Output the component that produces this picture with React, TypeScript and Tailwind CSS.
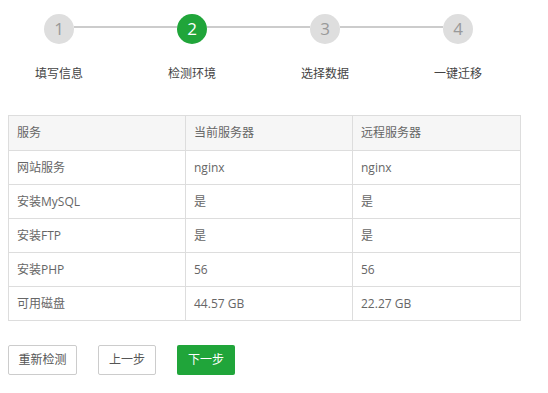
import React from "react";

const steps = ["填写信息", "检测环境", "选择数据", "一键迁移"];
const current = 1;

const rows = [
  ["网站服务", "nginx", "nginx"],
  ["安装MySQL", "是", "是"],
  ["安装FTP", "是", "是"],
  ["安装PHP", "56", "56"],
  ["可用磁盘", "44.57 GB", "22.27 GB"],
];

const StepBar = () => (
  <div className="pt-[14px]">
    <div className="flex items-center pl-[44px] w-[473px]">
      {steps.map((_, i) => (
        <React.Fragment key={i}>
          {i > 0 && <div className="flex-1 h-[2px] bg-[#cccccc] -mt-[4px]" />}
          <div
            className={
              i === current
                ? "w-[30px] h-[30px] rounded-full bg-[#20a53a] text-white flex items-center justify-center text-[17px] shrink-0"
                : "w-[30px] h-[30px] rounded-full bg-[#dedede] text-[#999999] flex items-center justify-center text-[17px] shrink-0"
            }
          >
            {i + 1}
          </div>
        </React.Fragment>
      ))}
    </div>
    <div className="flex gap-[33px] pl-[9px] mt-[21px]">
      {steps.map((s) => (
        <div key={s} className="w-[100px] text-center text-[12px] leading-[17px] text-[#444444]">
          {s}
        </div>
      ))}
    </div>
  </div>
);

export default function App() {
  return (
    <div
      className="w-[548px] h-[393px] bg-white overflow-hidden"
      style={{ fontFamily: '"Open Sans", "Noto Sans CJK SC", sans-serif' }}
    >
      <StepBar />
      <div className="px-[8px] mt-[33px]">
        <table className="w-[512px] border-collapse text-[12px] text-[#666666] table-fixed">
          <colgroup>
            <col className="w-[177px]" />
            <col className="w-[167px]" />
            <col className="w-[168px]" />
          </colgroup>
          <thead>
            <tr className="bg-[#f6f6f6] h-[35px]">
              <th className="border border-[#dddddd] text-left font-normal pl-[8px]">服务</th>
              <th className="border border-[#dddddd] text-left font-normal pl-[8px]">当前服务器</th>
              <th className="border border-[#dddddd] text-left font-normal pl-[8px]">远程服务器</th>
            </tr>
          </thead>
          <tbody>
            {rows.map((r) => (
              <tr key={r[0]} className="h-[34px]">
                {r.map((c, j) => (
                  <td key={j} className="border border-[#dddddd] pl-[8px]">
                    {c}
                  </td>
                ))}
              </tr>
            ))}
          </tbody>
        </table>
      </div>
      <div className="flex gap-[21px] px-[8px] mt-[24px] text-[12px]">
        <button className="h-[30px] w-[69px] border border-[#cccccc] rounded-[2px] text-[#555555] bg-white">
          重新检测
        </button>
        <button className="h-[30px] w-[58px] border border-[#cccccc] rounded-[2px] text-[#555555] bg-white">
          上一步
        </button>
        <button className="h-[30px] w-[58px] rounded-[2px] text-white bg-[#20a53a]">
          下一步
        </button>
      </div>
    </div>
  );
}
